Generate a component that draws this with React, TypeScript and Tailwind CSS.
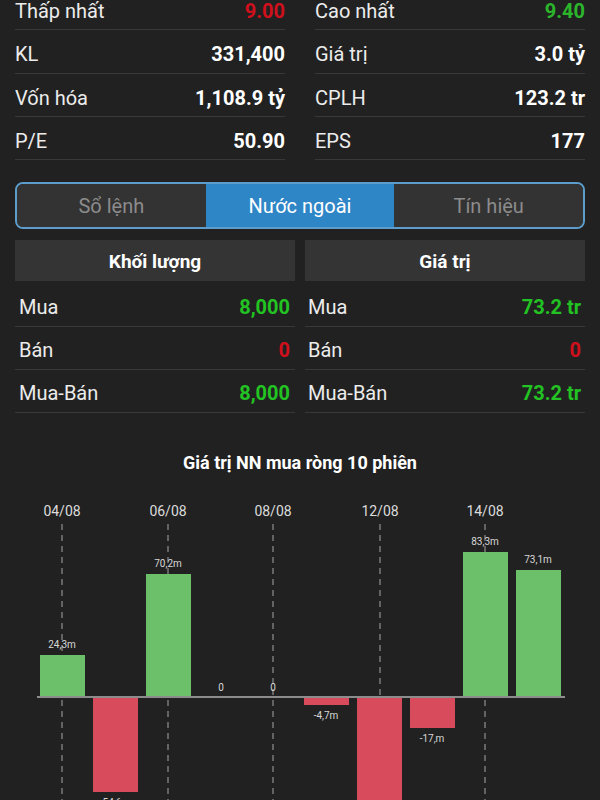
import React from "react"

type Stat = { label: string; value: string; color?: string }

const leftStats: Stat[] = [
  { label: "Thấp nhất", value: "9.00", color: "text-[#d0101c]" },
  { label: "KL", value: "331,400" },
  { label: "Vốn hóa", value: "1,108.9 tỷ" },
  { label: "P/E", value: "50.90" },
]

const rightStats: Stat[] = [
  { label: "Cao nhất", value: "9.40", color: "text-[#2bb52b]" },
  { label: "Giá trị", value: "3.0 tỷ" },
  { label: "CPLH", value: "123.2 tr" },
  { label: "EPS", value: "177" },
]

const volRows: Stat[] = [
  { label: "Mua", value: "8,000", color: "text-[#22c322]" },
  { label: "Bán", value: "0", color: "text-[#d0101c]" },
  { label: "Mua-Bán", value: "8,000", color: "text-[#22c322]" },
]

const valRows: Stat[] = [
  { label: "Mua", value: "73.2 tr", color: "text-[#22c322]" },
  { label: "Bán", value: "0", color: "text-[#d0101c]" },
  { label: "Mua-Bán", value: "73.2 tr", color: "text-[#22c322]" },
]

// chart bars in svg coords (svg top = page y 480), zero line at 217
const ZERO = 217
const bars = [
  { x: 40, v: 42, label: "24,3m" },
  { x: 93, v: -95, label: "-54,6m" },
  { x: 146, v: 123, label: "70,2m" },
  { x: 199, v: 0, label: "0" },
  { x: 251, v: 0, label: "0" },
  { x: 304, v: -8, label: "-4,7m" },
  { x: 357, v: -130, label: "-75,1m" },
  { x: 410, v: -31, label: "-17,m" },
  { x: 463, v: 145, label: "83,3m" },
  { x: 516, v: 127, label: "73,1m" },
]

const dates = [
  { x: 62, t: "04/08" },
  { x: 168, t: "06/08" },
  { x: 273, t: "08/08" },
  { x: 380, t: "12/08" },
  { x: 485, t: "14/08" },
]

function StatCol({ rows }: { rows: Stat[] }) {
  return (
    <div className="flex flex-col">
      {rows.map((r) => (
        <div key={r.label} className="flex h-[43.3px] items-center justify-between border-b border-[#383838] pt-[6px] text-[20px]">
          <span className="text-[#ececec]">{r.label}</span>
          <span className={`font-bold ${r.color ?? "text-white"}`}>{r.value}</span>
        </div>
      ))}
    </div>
  )
}

function FlowTable({ title, rows, pad }: { title: string; rows: Stat[]; pad: string }) {
  return (
    <div className="flex flex-col">
      <div className="flex h-[41px] items-center justify-center bg-[#343434] pt-[3px] text-[19px] font-bold text-white">{title}</div>
      <div className="mt-[3px] flex flex-col">
        {rows.map((r) => (
          <div key={r.label} className={`flex h-[43px] items-center justify-between border-b border-[#383838] pt-[4px] text-[20px] ${pad}`}>
            <span className="text-[#ececec]">{r.label}</span>
            <span className={`font-bold ${r.color}`}>{r.value}</span>
          </div>
        ))}
      </div>
    </div>
  )
}

function Chart() {
  return (
    <svg width="600" height="320" viewBox="0 0 600 320" className="block">
      {dates.map((d) => (
        <g key={d.t}>
          <text x={d.x} y={36} textAnchor="middle" fontSize="14" fill="#dcdcdc" fontFamily="Roboto, sans-serif">
            {d.t}
          </text>
          <line x1={d.x} y1={44} x2={d.x} y2={320} stroke="#7a7a7a" strokeWidth="1.5" strokeDasharray="6 5" />
        </g>
      ))}
      {bars.map((b, i) => {
        const cx = b.x + 22
        if (b.v === 0) {
          return (
            <text key={i} x={cx} y={211} textAnchor="middle" fontSize="10" fill="#d8d8d8" fontFamily="Roboto, sans-serif">
              {b.label}
            </text>
          )
        }
        const up = b.v > 0
        return (
          <g key={i}>
            <rect
              x={b.x}
              y={up ? ZERO - b.v : ZERO}
              width={45}
              height={Math.abs(b.v)}
              fill={up ? "#6cc06a" : "#d74b5c"}
            />
            <text
              x={cx}
              y={up ? ZERO - b.v - 7 : ZERO - b.v + 14}
              textAnchor="middle"
              fontSize="10"
              fill="#d8d8d8"
              fontFamily="Roboto, sans-serif"
            >
              {b.label}
            </text>
          </g>
        )
      })}
      <line x1={37} y1={ZERO} x2={565} y2={ZERO} stroke="#8c8c8c" strokeWidth="2" />
    </svg>
  )
}

export default function App() {
  return (
    <div className="h-[800px] w-[600px] overflow-hidden bg-[#212121] font-['Roboto',sans-serif]">
      <div className="mt-[-13px] grid grid-cols-2 gap-x-[30px] px-[15px]">
        <StatCol rows={leftStats} />
        <StatCol rows={rightStats} />
      </div>

      <div className="mx-[15px] mt-[22px] flex h-[47px] overflow-hidden rounded-lg border-2 border-[#5d9dcc] text-[20px]">
        <div className="flex flex-1 items-center justify-center bg-[#333333] text-[#8c8c8c]">Sổ lệnh</div>
        <div className="flex flex-1 items-center justify-center bg-[#2f86c7] text-white">Nước ngoài</div>
        <div className="flex flex-1 items-center justify-center bg-[#333333] text-[#8c8c8c]">Tín hiệu</div>
      </div>

      <div className="mt-[11px] grid grid-cols-2 gap-x-[10px] px-[15px]">
        <FlowTable title="Khối lượng" rows={volRows} pad="pl-[4px] pr-[5px]" />
        <FlowTable title="Giá trị" rows={valRows} pad="pl-[3px] pr-[4px]" />
      </div>

      <div className="mt-[39px] text-center text-[18px] font-bold leading-[22px] text-white">Giá trị NN mua ròng 10 phiên</div>
      <div className="mt-[6px]">
        <Chart />
      </div>
    </div>
  )
}
